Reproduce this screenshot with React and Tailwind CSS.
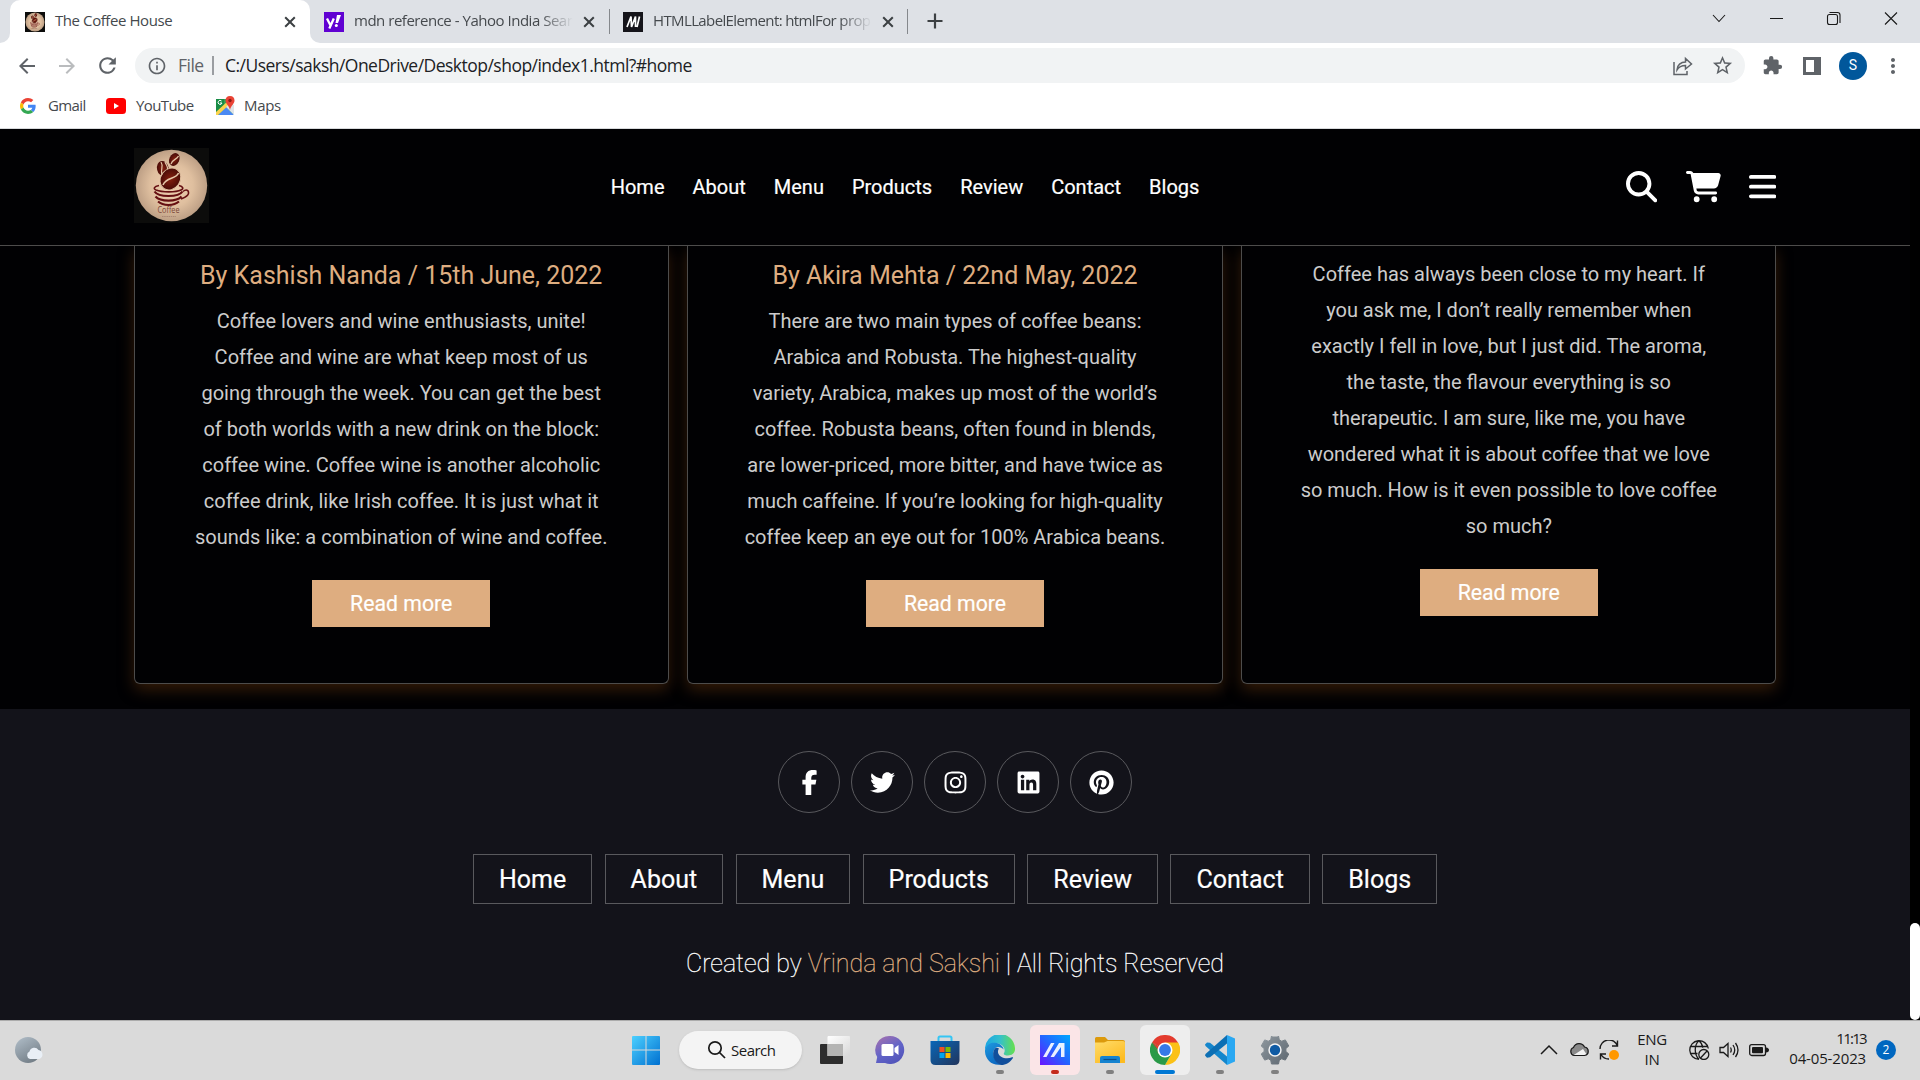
import React from "react";
import {
  FaMagnifyingGlass,
  FaCartShopping,
  FaBars,
  FaFacebookF,
  FaTwitter,
  FaInstagram,
  FaLinkedin,
  FaPinterest,
} from "react-icons/fa6";
import {
  MdArrowBack,
  MdArrowForward,
  MdRefresh,
  MdInfoOutline,
  MdStarBorder,
  MdExtension,
  MdMoreVert,
} from "react-icons/md";

const links = ["Home", "About", "Menu", "Products", "Review", "Contact", "Blogs"];

function CoffeeLogo({ className }) {
  return (
    <svg viewBox="0 0 75 75" className={className}>
      <defs>
        <radialGradient id="cream">
          <stop offset="0" stopColor="#f0cfb0" />
          <stop offset="0.6" stopColor="#dfbf9f" />
          <stop offset="1" stopColor="#bd9f85" />
        </radialGradient>
        <radialGradient id="bean">
          <stop offset="0" stopColor="#84200f" />
          <stop offset="1" stopColor="#4a0c08" />
        </radialGradient>
      </defs>
      <rect width="75" height="75" fill="#0c0c0b" />
      <circle cx="37.5" cy="37.5" r="35.7" fill="url(#cream)" />
      <g fill="url(#bean)">
        <ellipse cx="40.3" cy="11.5" rx="5" ry="6.700" transform="rotate(25 40.3 11.5)" />
        <ellipse cx="28.8" cy="20.5" rx="5.8" ry="7.600" transform="rotate(-12 28.8 20.5)" />
        <ellipse cx="36.4" cy="31" rx="9.800" ry="11.500" transform="rotate(35 36.4 31)" stroke="#dfbf9f" strokeWidth="1" />
      </g>
      <g fill="none" stroke="#e4c6a8" strokeWidth="1.200">
        <path d="M44.500 8c-2 4-6 3-7.500 8M27 14c3 4-1 8 1 13" />
        <path d="M44.500 25c-3 7-12 3.500-15.500 12" strokeWidth="1.600" />
        <path d="M31 14c1 3 3 4 2.500 7" />
      </g>
      <g fill="none" stroke="#650f12">
        <path d="M25 37.500c-5 1-6 3-3 4.500 6 2.500 20 2.500 25 0 3-1.500 2-3.500-2-4.500" strokeWidth="1.600" />
        <path d="M20.500 43.500c4 6 24 6 28 0" strokeWidth="2.200" />
        <path d="M21.500 48.500c5 5.500 21 5.500 26 0" strokeWidth="2.200" />
        <path d="M24 53.500c5 4.500 16 4.500 21 0" strokeWidth="2" />
        <path d="M49 43.500c3-2.500 6-1.500 5.500 2-.8 3-4 4-7.500 5.500" strokeWidth="1.500" />
      </g>
      <text x="34.500" y="65.300" textAnchor="middle" fontSize="8.500" textLength="22" lengthAdjust="spacingAndGlyphs" fill="#7a4537" fontFamily="Open Sans, sans-serif">Coffee</text>
      <path d="M28 68.500h14" stroke="#a98673" strokeWidth="1.200" strokeDasharray="1.500 .7" />
    </svg>
  );
}

function Cross({ size = 20 }) {
  return (
    <svg width={size} height={size} viewBox="0 0 20 20" className="shrink-0">
      <path d="M5.200 5.200l9.600 9.600M14.800 5.200l-9.600 9.600" stroke="#3c4043" strokeWidth="2" />
    </svg>
  );
}

function TabTitle({ children, className }) {
  return (
    <span className={"mb-[3px] whitespace-nowrap text-[15px] leading-5 text-[#45494d] " + className}>{children}</span>
  );
}

function TabStrip() {
  return (
    <div className="flex h-[43px] bg-[#dee1e6]">
      <div className="flex w-[10px] items-end bg-white">
        <div className="h-full w-full rounded-br-[10px] bg-[#dee1e6]" />
      </div>
      <div className="flex w-[300px] items-center rounded-t-[10px] bg-white pl-[15px] pr-[10px]">
        <CoffeeLogo className="h-5 w-5" />
        <TabTitle className="ml-[10px] w-[225px] tracking-[-0.42px]">The Coffee House</TabTitle>
        <Cross />
      </div>
      <div className="flex w-[299px] bg-white">
        <div className="flex w-full items-center rounded-bl-[10px] bg-[#dee1e6] pl-[14px]">
          <svg width="20" height="20" viewBox="0 0 20 20" className="shrink-0">
            <rect width="20" height="20" fill="#6001d2" />
            <path d="M3 6.500l3.300 6.500M9.800 6.500L5.300 16.500" stroke="#fff" strokeWidth="2.300" fill="none" />
            <path d="M13 3h4l-3 8h-2.500z" fill="#fff" />
            <circle cx="12.300" cy="13.500" r="1.500" fill="#fff" />
          </svg>
          <TabTitle className="ml-[10px] w-[219px] mask-r-from-85% tracking-[-0.48px]">mdn reference - Yahoo India Sear</TabTitle>
          <span className="ml-[6px] flex"><Cross /></span>
        </div>
      </div>
      <div className="mt-[9px] h-[25px] w-px bg-[#85888c]" />
      <div className="flex w-[297px] items-center pl-[13px]">
        <svg width="20" height="20" viewBox="0 0 20 20" className="shrink-0">
          <rect width="20" height="20" fill="#15141a" />
          <path d="M4 15L8 4.500 8.500 15l4-10.500L12.500 15M16.500 4.500L14 15" stroke="#fff" strokeWidth="1.700" fill="none" />
        </svg>
        <TabTitle className="ml-[10px] w-[219px] mask-r-from-85% tracking-[-0.62px]">HTMLLabelElement: htmlFor prop</TabTitle>
        <span className="ml-[6px] flex"><Cross /></span>
      </div>
      <div className="mt-[9px] h-[25px] w-px bg-[#85888c]" />
      <svg width="20" height="20" viewBox="0 0 20 20" className="ml-[17px] mt-[11px]">
        <path d="M10 2.500v15M2.500 10h15" stroke="#3c4043" strokeWidth="2.200" />
      </svg>
      <div className="ml-auto flex pr-[19px] pt-[8px]">
        <svg width="192" height="20" viewBox="0 0 192 20" fill="none" stroke="#1a1a1a" strokeWidth="1.100">
          <path d="M4 7l6 6.500 6-6.500M61 10.500h13" />
          <rect x="118.500" y="6.500" width="10" height="10" rx="2" />
          <path d="M120.500 4.500h8q2.500 0 2.500 2.500v8M176 4.500l12 12M188 4.500l-12 12" />
        </svg>
      </div>
    </div>
  );
}

function Toolbar() {
  return (
    <div className="flex h-[45px] items-center bg-white text-[#5f6368]">
      <MdArrowBack className="ml-[15px] size-6" />
      <MdArrowForward className="ml-[16px] size-6 text-[#babcbe]" />
      <MdRefresh className="ml-[16px] size-[25px]" />
      <div className="ml-[15px] flex h-[35px] w-[1610px] items-center rounded-full bg-[#f1f3f4] text-[17.500px]">
        <MdInfoOutline className="ml-[12px] size-[20px]" />
        <span className="ml-[11px] w-[34px] tracking-[-0.5px]">File</span>
        <div className="h-[19px] w-[2px] bg-[#9a9da1]" />
        <span className="ml-[11px] tracking-[-0.52px] text-[#202124]">C:/Users/saksh/OneDrive/Desktop/shop/index1.html?#home</span>
        <svg width="22" height="20" viewBox="0 0 22 20" className="ml-auto" fill="none" stroke="#5f6368" strokeWidth="1.500">
          <path d="M2 6v12.500h13V15" />
          <path d="M5 14c0-5 4-8 8.500-8V2.500l6 5.500-6 5v-3.500C10 9.500 7 10.500 5 14z" />
        </svg>
        <MdStarBorder className="ml-[17px] mr-[11px] size-[23px]" />
      </div>
      <MdExtension className="ml-[17px] size-[21px]" />
      <svg width="18" height="18" viewBox="0 0 18 18" className="ml-[20px]">
        <path d="M0 0h18v18H0zM3 3v12h8V3z" fill="#5f6368" fillRule="evenodd" />
      </svg>
      <div className="ml-[18px] flex size-7 items-center justify-center rounded-full bg-[#01579b] font-[Roboto] text-[14px] text-white">S</div>
      <MdMoreVert className="ml-[14px] size-[24px]" />
    </div>
  );
}

function Bookmarks() {
  return (
    <div className="flex h-[41px] items-center border-b border-[#d8dadc] bg-white pb-[5px] text-[15px] tracking-[-0.6px] text-[#45494d]">
      <svg viewBox="0 0 48 48" className="ml-[20px] size-[16px]">
        <path fill="#EA4335" d="M24 9.500c3.540 0 6.710 1.220 9.210 3.600l6.850-6.850C35.900 2.380 30.470 0 24 0 14.620 0 6.510 5.380 2.560 13.220l7.980 6.190C12.430 13.720 17.740 9.500 24 9.500z" />
        <path fill="#4285F4" d="M46.980 24.550c0-1.570-.15-3.090-.38-4.550H24v9.020h12.940c-.58 2.960-2.260 5.480-4.780 7.180l7.730 6c4.510-4.180 7.090-10.360 7.090-17.650z" />
        <path fill="#FBBC05" d="M10.530 28.590c-.48-1.450-.76-2.990-.76-4.590s.27-3.140.76-4.590l-7.980-6.190C.92 16.460 0 20.120 0 24c0 3.880.92 7.540 2.560 10.780l7.970-6.190z" />
        <path fill="#34A853" d="M24 48c6.480 0 11.930-2.130 15.890-5.810l-7.730-6c-2.150 1.450-4.920 2.300-8.160 2.300-6.260 0-11.570-4.220-13.470-9.910l-7.980 6.190C6.510 42.620 14.620 48 24 48z" />
      </svg>
      <span className="ml-[12px] w-[58px]">Gmail</span>
      <svg width="20" height="16" viewBox="0 0 20 16">
        <rect width="20" height="16" rx="3.500" fill="#f00" />
        <path d="M8 5v6l5-3z" fill="#fff" />
      </svg>
      <span className="ml-[10px] w-[79px]">YouTube</span>
      <svg width="20" height="20" viewBox="0 0 20 20">
        <path d="M1 3h17v16H1z" fill="#34a055" />
        <path d="M1 3h8v7L1 17z" fill="#188c46" />
        <path d="M3 19l8-8 8 8z" fill="#4a89f3" />
        <path d="M1 16L14 4l2 3L3 19H1z" fill="#fbd34d" />
        <path d="M11 11l8 8V9l-4-2z" fill="#dfe3e6" />
        <path d="M15 0c3 0 4.500 2 4.500 4.500C19.500 8 16 9 15 14c-1-5-4.500-6-4.500-9.500C10.500 2 12 0 15 0z" fill="#ea4335" />
        <circle cx="15" cy="4.500" r="1.700" fill="#8c1c14" />
        <path d="M6.500 5a2 2 0 1 0 .5 2H5" stroke="#fff" fill="none" />
      </svg>
      <span className="ml-[9px] tracking-[-0.3px]">Maps</span>
    </div>
  );
}

function SiteHeader() {
  return (
    <header className="flex h-[117px] items-center border-b border-[#4d4c4b] bg-[#010103] px-[133.700px] text-white">
      <CoffeeLogo className="mb-[3px] size-[75px]" />
      <nav className="ml-[402px] flex gap-[28px] text-[20px] [-webkit-text-stroke:0.2px_white]">
        {links.map((l) => (
          <a key={l}>{l}</a>
        ))}
      </nav>
      <div className="ml-auto flex gap-[28px] text-[31.250px]">
        <FaMagnifyingGlass className="mr-px" />
        <FaCartShopping className="w-[35px]" />
        <FaBars className="w-[27.300px]" />
      </div>
    </header>
  );
}

const posts = [
  {
    by: "By Kashish Nanda / 15th June, 2022",
    lines: [
      "Coffee lovers and wine enthusiasts, unite!",
      "Coffee and wine are what keep most of us",
      "going through the week. You can get the best",
      "of both worlds with a new drink on the block:",
      "coffee wine. Coffee wine is another alcoholic",
      "coffee drink, like Irish coffee. It is just what it",
      "sounds like: a combination of wine and coffee.",
    ],
  },
  {
    by: "By Akira Mehta / 22nd May, 2022",
    lines: [
      "There are two main types of coffee beans:",
      "Arabica and Robusta. The highest-quality",
      "variety, Arabica, makes up most of the world’s",
      "coffee. Robusta beans, often found in blends,",
      "are lower-priced, more bitter, and have twice as",
      "much caffeine. If you’re looking for high-quality",
      "coffee keep an eye out for 100% Arabica beans.",
    ],
  },
  {
    lines: [
      "Coffee has always been close to my heart. If",
      "you ask me, I don’t really remember when",
      "exactly I fell in love, but I just did. The aroma,",
      "the taste, the flavour everything is so",
      "therapeutic. I am sure, like me, you have",
      "wondered what it is about coffee that we love",
      "so much. How is it even possible to love coffee",
      "so much?",
    ],
  },
];

function PostCard({ post }) {
  return (
    <article className="flex h-[438px] flex-1 flex-col items-center rounded-b-[6px] border border-t-0 border-[#4d4c4b] bg-[#010103] shadow-[0_6px_15px_#331b08]">
      {post.by ? <h3 className="mt-[15px] text-[25px] leading-[30px] text-[#dead80]">{post.by}</h3> : null}
      <div className={"text-center text-[20px] leading-9 whitespace-nowrap text-[#cccccc] " + (post.by ? "mt-[12px]" : "mt-[10px]")}>
        {post.lines.map((l) => (
          <p key={l}>{l}</p>
        ))}
      </div>
      <button className="mt-[25px] h-[47px] w-[177.500px] bg-[#dead80] text-[21.250px] text-white [-webkit-text-stroke:0.2px_white]">Read more</button>
    </article>
  );
}

function Footer() {
  const socials = [FaFacebookF, FaTwitter, FaInstagram, FaLinkedin, FaPinterest];
  return (
    <footer className="flex h-[311px] flex-col items-center bg-[#13131a] pt-[42px] text-[25px] text-white">
      <div className="flex gap-[11px]">
        {socials.map((Icon, i) => (
          <a key={i} className="flex size-[62px] items-center justify-center rounded-full border border-[#59595d]">
            <Icon className="size-[25px]" />
          </a>
        ))}
      </div>
      <div className="mt-[41px] flex gap-[12.400px] [-webkit-text-stroke:0.2px_white]">
        {links.map((l) => (
          <a key={l} className="flex h-[50px] items-center border border-[#59595d] px-[25px] pt-[2px]">{l}</a>
        ))}
      </div>
      <p className="mt-[45px] leading-[30px] font-thin whitespace-nowrap [-webkit-text-stroke:0.3px_currentColor]">
        Created by <span className="text-[#dead80]">Vrinda and Sakshi</span> | All Rights Reserved
      </p>
    </footer>
  );
}

function WebPage() {
  return (
    <div className="flex h-[891px] bg-black font-[Roboto]">
      <main className="w-[1910px] bg-[#010103]">
        <SiteHeader />
        <div className="flex h-[463px] gap-[18.750px] overflow-hidden px-[133.700px]">
          {posts.map((p, i) => (
            <PostCard key={i} post={p} />
          ))}
        </div>
        <Footer />
      </main>
      <div className="flex w-[10px] items-end bg-black">
        <div className="h-[97px] w-full rounded-[5px] bg-white" />
      </div>
    </div>
  );
}

function AppSlot({ children, tile = "", dot = "" }) {
  return (
    <div className={"flex size-[50px] flex-col items-center rounded-[6px] pt-[10px] " + tile}>
      {children}
      <div className={"mt-[5px] h-1 shrink-0 rounded-full " + dot} />
    </div>
  );
}

function Icon({ children }) {
  return (
    <svg width="30" height="30" viewBox="0 0 30 30" className="shrink-0">
      {children}
    </svg>
  );
}

function TaskbarApps() {
  return (
    <div className="mb-px flex items-center gap-[5px]">
      <AppSlot>
        <Icon>
          <defs>
            <linearGradient id="win" x2="1" y2="1">
              <stop offset="0" stopColor="#4cd0ff" />
              <stop offset="1" stopColor="#0070d0" />
            </linearGradient>
            <linearGradient id="glass" x2="1" y2="1">
              <stop offset="0" stopColor="#ffffff" />
              <stop offset="1" stopColor="#d8d8d8" />
            </linearGradient>
            <linearGradient id="chat" x1="0.2" y1="0" x2="0.8" y2="1">
              <stop offset="0" stopColor="#a070b0" />
              <stop offset="0.5" stopColor="#6264c8" />
              <stop offset="1" stopColor="#4f52b8" />
            </linearGradient>
            <linearGradient id="store" x2="1" y2="1">
              <stop offset="0" stopColor="#0867b8" />
              <stop offset="1" stopColor="#22355c" />
            </linearGradient>
            <linearGradient id="edgeTop">
              <stop offset="0" stopColor="#1ba5e4" />
              <stop offset="0.5" stopColor="#34c0cc" />
              <stop offset="1" stopColor="#66e04c" />
            </linearGradient>
            <linearGradient id="edgeLow" x2="0.6" y2="1">
              <stop offset="0" stopColor="#1f9be0" />
              <stop offset="1" stopColor="#0b66c0" />
            </linearGradient>
            <linearGradient id="asus" x1="0" y1="1" x2="1" y2="0">
              <stop offset="0" stopColor="#6a12ff" />
              <stop offset="0.5" stopColor="#2464ff" />
              <stop offset="1" stopColor="#00a8ff" />
            </linearGradient>
            <linearGradient id="folder" x2="0.7" y2="1">
              <stop offset="0" stopColor="#ffdc6a" />
              <stop offset="1" stopColor="#fdbb20" />
            </linearGradient>
            <linearGradient id="gear" x2="1" y2="1">
              <stop offset="0" stopColor="#8f989f" />
              <stop offset="1" stopColor="#5d6770" />
            </linearGradient>
          </defs>
          <path d="M2 1h12.500v13.500H1V2q0-1 1-1zM15.500 1H28q1 0 1 1v12.500H15.500zM1 15.500h13.500V30H2q-1 0-1-1zM15.500 15.500H29V29q0 1-1 1H15.500z" fill="url(#win)" />
        </Icon>
      </AppSlot>
      <div className="mx-[3px] flex h-[38px] w-[123px] items-center rounded-full bg-[#f4f4f4] pl-[28px] text-[15px] tracking-[-0.5px] text-[#1a1a1a] shadow-sm">
        <svg width="20" height="20" viewBox="0 0 20 20" fill="none" stroke="#1a1a1a" strokeWidth="1.700">
          <circle cx="8" cy="8" r="6.200" />
          <path d="M12.500 12.500l5.500 5.500" />
        </svg>
        <span className="ml-[4px]">Search</span>
      </div>
      <AppSlot>
        <Icon>
          <rect y="9" width="23" height="20" rx="1" fill="#2d2d2d" />
          <path d="M8 1h21q1 0 1 1v18q0 1-1 1H7.500V2z" fill="url(#glass)" />
          <path d="M7.500 9H23v12H7.500z" fill="#b4b4b3" />
        </Icon>
      </AppSlot>
      <AppSlot>
        <Icon>
          <path d="M15 1a14 14 0 1 1-5 27H1l1.200-6A14 14 0 0 1 15 1z" fill="url(#chat)" />
          <rect x="6.500" y="9" width="12" height="12" rx="1.500" fill="#fff" />
          <path d="M19.500 13l4-3v10l-4-3z" fill="#fff" />
        </Icon>
      </AppSlot>
      <AppSlot>
        <Icon>
          <path d="M8.500 7V3q0-1.500 1.500-1.500h10q1.500 0 1.500 1.500v4" fill="none" stroke="#35c5f4" strokeWidth="2" />
          <path d="M0.500 6h29v19q0 5-5 5h-19q-5 0-5-5z" fill="url(#store)" />
          <path d="M9.500 12h5v5h-5z" fill="#f25022" />
          <path d="M15.500 12h5v5h-5z" fill="#7fba00" />
          <path d="M9.500 18h5v5h-5z" fill="#00a4ef" />
          <path d="M15.500 18h5v5h-5z" fill="#ffb900" />
        </Icon>
      </AppSlot>
      <AppSlot dot="w-2 bg-[#808080]">
        <Icon>
          <path d="M0 15a15 15 0 0 1 30-2c.5 5-3 7.500-7 7.500-3 0-5-1-4-2.500 1.500-2 1-8-6-9.500C8 7.500 3 9 0 15z" fill="url(#edgeTop)" />
          <path d="M0 15C2 9 6 7.500 10 7.800c5 .5 8.500 3.700 8.500 6.700-2-3-7-3.500-9-.5-3 4.500 0 13 7 15.500C7 31.500-.5 24 0 15z" fill="url(#edgeLow)" />
          <path d="M9.800 13.500C6 19.500 9 27.500 16 30c5 0 9-2.500 12-7 .3-1-.3-1-1-.7-5 2.200-13 .7-14-4.800-.2-2 .3-3 1-4-1.500-1-3-1-4.200 0z" fill="#114f9c" />
        </Icon>
      </AppSlot>
      <AppSlot tile="bg-[#fbe5e7]" dot="w-2 bg-[#c42b1c]">
        <Icon>
          <rect width="30" height="30" fill="url(#asus)" />
          <path d="M3 22L11 8h3.500L6.500 22zM10.500 22L19 8h5.500v14H21V12L14 22z" fill="#fff" opacity="0.900" />
          <path d="M17.500 18h3v4h-3z" fill="#2464ff" opacity="0.500" />
        </Icon>
      </AppSlot>
      <AppSlot dot="w-2 bg-[#808080]">
        <Icon>
          <path d="M0 3.500Q0 2 1.500 2H10l3 3h15q2 0 2 2v5H0z" fill="#dc9a0c" />
          <path d="M0 7.500h9L12.500 6H28q2 0 2 1.500V28H0z" fill="url(#folder)" />
          <path d="M5 28v-5q0-2 2-2h16q2 0 2 2v5z" fill="#1583d0" />
          <path d="M8.500 24.500h13" stroke="#0a4f8c" strokeWidth="1.200" />
        </Icon>
      </AppSlot>
      <AppSlot tile="bg-[#eeeeee]" dot="w-5 bg-[#0078d4]">
        <Icon>
          <path d="M15 15L2 7.500A15 15 0 0 1 28 7.500z" fill="#e33b2e" />
          <path d="M15 15l13-7.500A15 15 0 0 1 15 30l6.500-11.300z" fill="#fbc116" />
          <path d="M15 15l6.500 3.700L15 30A15 15 0 0 1 2 7.500z" fill="#2a9a48" />
          <path d="M15 7.500h13v2H15zM8.500 18.700L2 7.500 15 15z" fill="#e33b2e" />
          <path d="M15 7.500h13a15 15 0 0 1 1 12H21.500z" fill="#fbc116" />
          <path d="M2 7.500l6.500 11.200 6.500 3.800z" fill="#2a9a48" />
          <circle cx="15" cy="15" r="7.500" fill="#fff" />
          <circle cx="15" cy="15" r="5.900" fill="#3579e8" />
        </Icon>
      </AppSlot>
      <AppSlot dot="w-2 bg-[#808080]">
        <Icon>
          <path d="M0 9.500l2-2 3 .3 17 13.700V30L.5 11z" fill="#1486cc" />
          <path d="M0 20.500l2 2.200 3-.5L22 8.500V0L.5 19z" fill="#0c6fb4" />
          <path d="M22 0l8 3.500v23L22 30z" fill="#2aa8f2" />
        </Icon>
      </AppSlot>
      <AppSlot dot="w-2 bg-[#808080]">
        <Icon>
          <path
            d="M11.500 1l-.8 3.800-2.400 1.400-3.600-1.300L1.200 11l2.900 2.500v3L1.200 19l3.500 6.100 3.600-1.300 2.400 1.400.8 3.800h7l.8-3.800 2.400-1.400 3.600 1.300 3.500-6.100-2.900-2.500v-3l2.900-2.500-3.500-6.100-3.600 1.300-2.400-1.400L18.500 1l-1 1h-5z"
            fill="url(#gear)"
            stroke="url(#gear)"
            strokeWidth="1"
            strokeLinejoin="round"
          />
          <circle cx="15" cy="15" r="6.700" fill="#f4f4f4" />
          <circle cx="15" cy="15" r="5.200" fill="#0f5ba4" />
        </Icon>
      </AppSlot>
    </div>
  );
}

function Tray() {
  return (
    <div className="mb-[2px] ml-auto flex items-center pr-[24px] text-[15px] leading-5 text-[#1a1a1a]">
      <svg width="20" height="20" viewBox="0 0 20 20" fill="none" stroke="#1a1a1a" strokeWidth="1.500">
        <path d="M2 14l8-8 8 8" />
      </svg>
      <svg width="20" height="20" viewBox="0 0 20 20" className="ml-[10px]">
        <path d="M5 16a4.500 4.500 0 0 1-.5-8.500 6 6 0 0 1 11-.5A4.500 4.500 0 0 1 15.500 16z" fill="#8a8a8a" />
        <path d="M4 15.500L14 9l4 6-3 1z" fill="#f3f3f3" />
        <path d="M5 15.500a4.200 4.200 0 0 1-.5-8 6 6 0 0 1 11-.5 4.300 4.300 0 0 1 0 8.500z" fill="none" stroke="#1a1a1a" strokeWidth="1.200" />
      </svg>
      <svg width="20" height="20" viewBox="0 0 20 20" className="ml-[10px]" fill="none" stroke="#1a1a1a" strokeWidth="1.400">
        <path d="M1 9a9 9 0 0 1 17.500-3M18.500.5V6H13M1.500 19.500V14H7M2 14.500a9 9 0 0 0 8 4.500" />
        <circle cx="15" cy="15" r="5" fill="#ff9800" stroke="none" />
      </svg>
      <div className="mb-[2px] ml-[18px] w-[30px] text-center tracking-[-0.3px]">
        <div>ENG</div>
        <div>IN</div>
      </div>
      <svg width="22" height="20" viewBox="0 0 22 20" className="ml-[22px]" fill="none" stroke="#1a1a1a" strokeWidth="1.300">
        <path d="M19.300 8.500A9.300 9.300 0 1 0 10 19.300M1.500 6.500h17M1.500 13.500h7M10 .7c-5 4-5 14 0 18.600M10 .7c2 1.700 3.500 4.500 3.700 7" />
        <circle cx="14.800" cy="14.500" r="5" />
        <path d="M11.500 18l6.500-7" />
      </svg>
      <svg width="20" height="20" viewBox="0 0 20 20" className="ml-[8px]" fill="none" stroke="#1a1a1a" strokeWidth="1.300">
        <path d="M1 7.500h3.500L9 3.500v13l-4.500-4H1zM11.500 7.500q1.500 2.500 0 5M14 5q3.500 5 0 10M16.500 3q5 7 0 14" />
      </svg>
      <svg width="20" height="20" viewBox="0 0 20 20" className="ml-[10px]">
        <rect x=".7" y="4.700" width="15.800" height="10.800" rx="2" fill="none" stroke="#1a1a1a" strokeWidth="1.300" />
        <rect x="3" y="7" width="11" height="6.200" rx="1" fill="#1a1a1a" />
        <path d="M17 7.500q3 .5 3 2.500t-3 2.500z" fill="#1a1a1a" />
      </svg>
      <div className="mb-[3px] ml-[18px] w-[79px] text-right tracking-[-0.150px] whitespace-nowrap">
        <div className="tracking-[-1.700px]">11:13</div>
        <div>04-05-2023</div>
      </div>
      <div className="ml-[10px] flex size-5 items-center justify-center rounded-full bg-[#0067c0] text-[12px] text-white">2</div>
    </div>
  );
}

function Taskbar() {
  return (
    <div className="flex h-[60px] items-center border-t border-[#acacac] bg-[#dadada]">
      <div className="w-[621px] pl-[14px]">
        <svg width="30" height="28" viewBox="0 0 30 28" className="mb-px">
          <defs>
            <linearGradient id="moon" x2="0.6" y2="1">
              <stop offset="0" stopColor="#b2bfca" />
              <stop offset="1" stopColor="#747f88" />
            </linearGradient>
          </defs>
          <circle cx="14" cy="14" r="13" fill="url(#moon)" />
          <path d="M16 23a4 4 0 0 1-.5-7.500 5 5 0 0 1 9-1.500 4.700 4.700 0 0 1 1 9z" fill="#e9eff6" />
        </svg>
      </div>
      <TaskbarApps />
      <Tray />
    </div>
  );
}

export default function App() {
  return (
    <div className="h-[1080px] w-[1920px] overflow-hidden bg-white font-['Open_Sans',sans-serif]">
      <TabStrip />
      <Toolbar />
      <Bookmarks />
      <WebPage />
      <Taskbar />
    </div>
  );
}
